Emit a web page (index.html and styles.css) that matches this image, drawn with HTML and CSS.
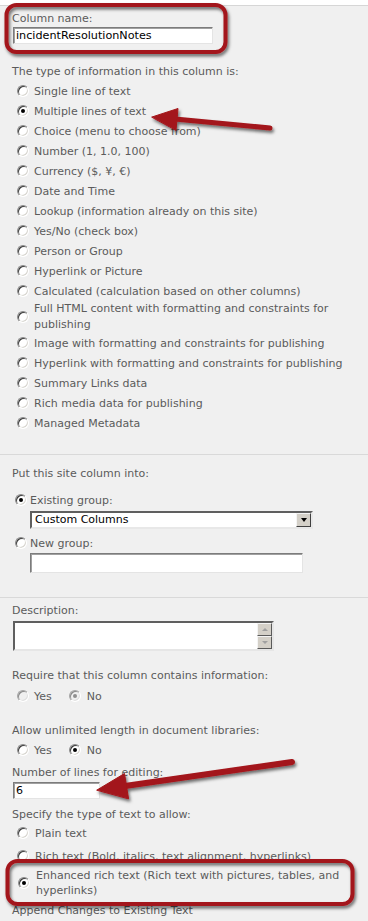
FILE: index.html
```html
<!DOCTYPE html>
<html>
<head>
<meta charset="utf-8">
<link rel="stylesheet" href="styles.css">
</head>
<body>
<div class="page">
  <section class="sec sec1">
    <div class="lbl">Column name:</div>
    <div class="input name-input">incidentResolutionNotes</div>
    <div class="lbl q1">The type of information in this column is:</div>
    <div class="opts">
      <div class="opt"><span class="radio"></span><span>Single line of text</span></div>
      <div class="opt"><span class="radio on"></span><span>Multiple lines of text</span></div>
      <div class="opt"><span class="radio"></span><span>Choice (menu to choose from)</span></div>
      <div class="opt"><span class="radio"></span><span>Number (1, 1.0, 100)</span></div>
      <div class="opt"><span class="radio"></span><span>Currency ($, ¥, €)</span></div>
      <div class="opt"><span class="radio"></span><span>Date and Time</span></div>
      <div class="opt"><span class="radio"></span><span>Lookup (information already on this site)</span></div>
      <div class="opt"><span class="radio"></span><span>Yes/No (check box)</span></div>
      <div class="opt"><span class="radio"></span><span>Person or Group</span></div>
      <div class="opt"><span class="radio"></span><span>Hyperlink or Picture</span></div>
      <div class="opt"><span class="radio"></span><span>Calculated (calculation based on other columns)</span></div>
      <div class="opt two"><span class="radio"></span><span>Full HTML content with formatting and constraints for publishing</span></div>
      <div class="opt"><span class="radio"></span><span>Image with formatting and constraints for publishing</span></div>
      <div class="opt"><span class="radio"></span><span>Hyperlink with formatting and constraints for publishing</span></div>
      <div class="opt"><span class="radio"></span><span>Summary Links data</span></div>
      <div class="opt"><span class="radio"></span><span>Rich media data for publishing</span></div>
      <div class="opt"><span class="radio"></span><span>Managed Metadata</span></div>
    </div>
  </section>

  <section class="sec sec2">
    <div class="lbl">Put this site column into:</div>
    <div class="gopt g-existing"><span class="radio on"></span><span>Existing group:</span></div>
    <div class="select">
      <span class="select-text">Custom Columns</span>
      <span class="select-btn"><span class="tri-down"></span></span>
    </div>
    <div class="gopt g-new"><span class="radio"></span><span>New group:</span></div>
    <div class="input group-input"></div>
  </section>

  <section class="sec sec3">
    <div class="lbl">Description:</div>
    <div class="textarea">
      <div class="ta-body"></div>
      <div class="ta-scroll">
        <span class="sbtn"><span class="tri-up-dis"></span></span>
        <span class="sbtn"><span class="tri-down-dis"></span></span>
      </div>
    </div>
    <div class="lbl q-req">Require that this column contains information:</div>
    <div class="yn yn1">
      <span class="radio dis"></span><span class="yes">Yes</span>
      <span class="radio dis on"></span><span class="no">No</span>
    </div>
    <div class="lbl q-unl">Allow unlimited length in document libraries:</div>
    <div class="yn yn2">
      <span class="radio"></span><span class="yes">Yes</span>
      <span class="radio on"></span><span class="no">No</span>
    </div>
    <div class="lbl q-lines">Number of lines for editing:</div>
    <div class="input lines-input">6</div>
    <div class="lbl q-spec">Specify the type of text to allow:</div>
    <div class="topt t-plain"><span class="radio"></span><span>Plain text</span></div>
    <div class="topt t-rich"><span class="radio"></span><span>Rich text (Bold, italics, text alignment, hyperlinks)</span></div>
    <div class="topt t-enh"><span class="radio on"></span><span>Enhanced rich text (Rich text with pictures, tables, and hyperlinks)</span></div>
    <div class="lbl q-app">Append Changes to Existing Text</div>
  </section>
</div>

<svg class="annot" width="368" height="921" viewBox="0 0 368 921" xmlns="http://www.w3.org/2000/svg">
  <defs>
    <filter id="sh" x="-20%" y="-20%" width="140%" height="160%">
      <feDropShadow dx="1.5" dy="2.5" stdDeviation="1.8" flood-color="#000" flood-opacity="0.55"/>
    </filter>
  </defs>
  <g filter="url(#sh)" fill="none" stroke="#a3141a" stroke-width="4">
    <rect x="6.5" y="5" width="219" height="47" rx="10"/>
    <rect x="7.5" y="861" width="345" height="43" rx="10"/>
  </g>
  <g filter="url(#sh)" fill="#a3141a" stroke="#a3141a" stroke-linecap="round" stroke-linejoin="round">
    <line x1="175" y1="119" x2="270" y2="128" stroke-width="5"/>
    <polygon points="152,117 178,108.5 176,130" stroke-width="1"/>
    <line x1="125" y1="786" x2="292" y2="762" stroke-width="6"/>
    <polygon points="97,790 124.5,773.5 128.5,798.5" stroke-width="1"/>
  </g>
</svg>
</body>
</html>
```

FILE: styles.css
```css
html, body {
  margin: 0;
  padding: 0;
  background: #ffffff;
}
body {
  position: relative;
  width: 368px;
  height: 921px;
  overflow: hidden;
  font-family: "DejaVu Sans", Verdana, sans-serif;
  font-size: 11px;
  color: #5b5b5b;
}
.page {
  margin-top: 5px;
  border-top: 1px solid #d6d6d6;
  background: #f0f0f0;
  height: 915px;
}
.sec {
  padding-left: 12px;
}
.sec + .sec {
  border-top: 1px solid #d9d9d9;
}
.lbl {
  line-height: 14px;
  white-space: nowrap;
}

/* ---------- radios ---------- */
.radio {
  flex: none;
  position: relative;
  box-sizing: border-box;
  width: 12px;
  height: 12px;
  border-radius: 50%;
  border: 1px solid;
  border-color: #8a8a8a #ffffff #ffffff #8a8a8a;
  background: #ffffff;
  box-shadow: inset 1px 1px 0 #3c3c3c, inset -1px -1px 0 #d8d6d0;
}
.radio.on::after {
  content: "";
  position: absolute;
  left: 3px;
  top: 3px;
  width: 4px;
  height: 4px;
  border-radius: 50%;
  background: #000;
}
.radio.dis {
  border-color: #a5a5a5 #ffffff #ffffff #a5a5a5;
  background: #f0f0f0;
  box-shadow: inset 1px 1px 0 #8a8a8a, inset -1px -1px 0 #e0e0e0;
}
.radio.dis.on::after {
  background: #8f8f8f;
}

/* ---------- inputs ---------- */
.input {
  box-sizing: border-box;
  background: #fff;
  border: 1px solid;
  border-color: #7c7c7c #e4e4e4 #e4e4e4 #7c7c7c;
  box-shadow: inset 1px 1px 0 #a0a0a0;
  color: #000;
  font-size: 11px;
  white-space: nowrap;
}

/* ---------- section 1 ---------- */
.sec1 {
  padding-top: 6px;
  padding-bottom: 21px;
}
.name-input {
  margin: 1px 0 0 1px;
  width: 200px;
  height: 17px;
  line-height: 15px;
  padding-left: 2px;
  font-size: 11.2px;
}
.q1 {
  margin-top: 21px;
}
.opts {
  margin-top: 2px;
  display: flex;
  flex-direction: column;
}
.opt {
  display: flex;
  align-items: center;
  gap: 5px;
  height: 20px;
  padding-left: 5px;
  white-space: nowrap;
}
.opt.two {
  height: 32px;
  white-space: normal;
  line-height: 16px;
  padding-right: 16px;
}

/* ---------- section 2 ---------- */
.sec2 {
  padding-top: 12px;
  padding-bottom: 24px;
}
.gopt {
  display: flex;
  align-items: center;
  gap: 3px;
  height: 20px;
  padding-left: 3px;
}
.g-existing {
  margin-top: 9px;
}
.g-new {
  margin-top: 4px;
}
.select {
  box-sizing: border-box;
  margin: 1px 0 0 18px;
  width: 283px;
  height: 18px;
  display: flex;
  align-items: center;
  background: #fff;
  border: 2px solid;
  border-color: #5f5f5f #e8e8e8 #e8e8e8 #5f5f5f;
}
.select-text {
  flex: 1;
  color: #000;
  padding-left: 3px;
  font-size: 11px;
  line-height: 14px;
}
.select-btn {
  box-sizing: border-box;
  width: 15px;
  height: 14px;
  background: #d4d0c8;
  border: 1px solid;
  border-color: #f4f4f4 #404040 #404040 #f4f4f4;
  display: flex;
  align-items: center;
  justify-content: center;
}
.tri-down {
  width: 0;
  height: 0;
  border-left: 3.5px solid transparent;
  border-right: 3.5px solid transparent;
  border-top: 4px solid #000;
}
.group-input {
  margin-left: 18px;
  width: 273px;
  height: 20px;
}

/* ---------- section 3 ---------- */
.sec3 {
  padding-top: 6px;
}
.textarea {
  box-sizing: border-box;
  margin: 3px 0 0 1px;
  width: 261px;
  height: 30px;
  display: flex;
  background: #fff;
  border: 2px solid;
  border-color: #5f5f5f #e6e6e6 #e6e6e6 #5f5f5f;
}
.ta-body {
  flex: 1;
}
.ta-scroll {
  display: flex;
  flex-direction: column;
  width: 15px;
}
.sbtn {
  box-sizing: border-box;
  height: 13px;
  background: #d4d0c8;
  border: 1px solid;
  border-color: #f4f4f4 #5a5a5a #5a5a5a #f4f4f4;
  display: flex;
  align-items: center;
  justify-content: center;
}
.tri-up-dis {
  width: 0;
  height: 0;
  border-left: 3px solid transparent;
  border-right: 3px solid transparent;
  border-bottom: 3px solid #a0a0a0;
}
.tri-down-dis {
  width: 0;
  height: 0;
  border-left: 3px solid transparent;
  border-right: 3px solid transparent;
  border-top: 3px solid #a0a0a0;
}
.q-req {
  margin-top: 18px;
}
.yn {
  display: flex;
  align-items: center;
  height: 20px;
  padding-left: 5px;
}
.yn .yes {
  margin-left: 5px;
  margin-right: 17px;
}
.yn .no {
  margin-left: 6px;
}
.yn1 {
  margin-top: 3px;
}
.q-unl {
  margin-top: 18px;
}
.yn2 {
  margin-top: 2px;
}
.q-lines {
  margin-top: 6px;
}
.lines-input {
  margin: 2px 0 0 1px;
  width: 87px;
  height: 17px;
  line-height: 15px;
  padding-left: 2px;
}
.q-spec {
  margin-top: 9px;
}
.topt {
  display: flex;
  align-items: center;
  gap: 6px;
  padding-left: 5px;
  height: 20px;
  white-space: nowrap;
}
.t-plain {
  margin-top: 1px;
}
.t-rich {
  margin-top: 3px;
}
.t-enh {
  margin-top: 2px;
  height: 30px;
  line-height: 15px;
  white-space: normal;
  padding-left: 6px;
  padding-right: 14px;
  gap: 6px;
}
.q-app {
  margin-top: 6px;
}

/* ---------- annotation overlay ---------- */
.annot {
  position: absolute;
  left: 0;
  top: 0;
  pointer-events: none;
}
```
